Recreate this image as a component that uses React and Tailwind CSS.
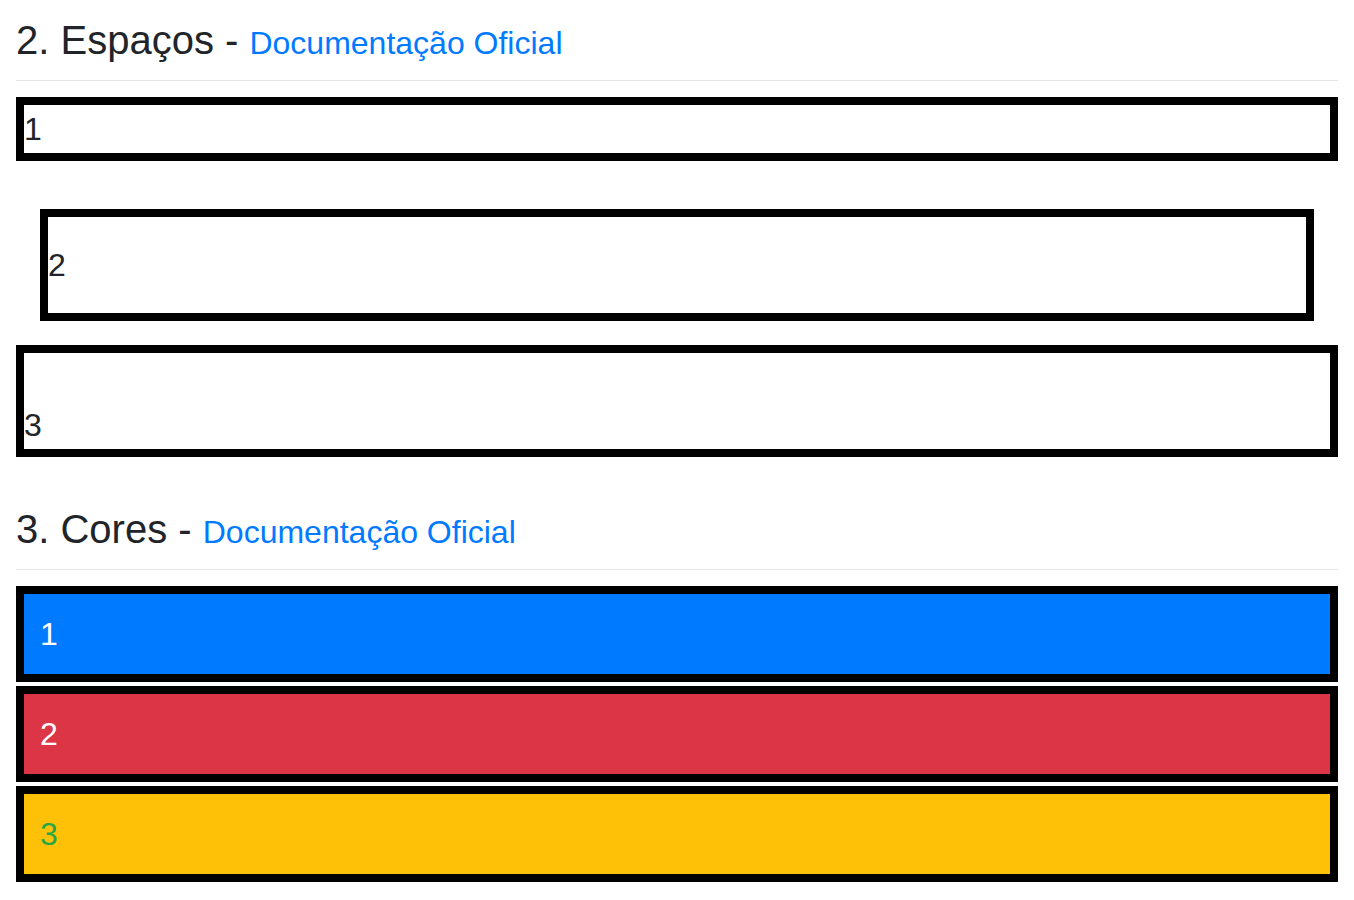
const font = { fontFamily: '"Liberation Sans", Arial, sans-serif' }

function Heading({ children }) {
  return (
    <>
      <h2 className="text-[40px] leading-[48px] font-normal text-[#212529]">
        {children} -{' '}
        <small className="text-[32px] leading-none">
          <a href="#" className="text-[#007bff] no-underline">Documentação Oficial</a>
        </small>
      </h2>
      <hr className="mt-4 mb-4 border-0 border-t border-[#e6e6e6]" />
    </>
  )
}

export default function App() {
  return (
    <div className="bg-white min-h-screen px-4 pt-4 text-[32px] leading-[48px] text-[#212529]" style={font}>
      <section className="flex flex-col">
        <Heading>2. Espaços</Heading>
        <div className="border-8 border-black mb-6">1</div>
        <div className="border-8 border-black m-6 py-6">2</div>
        <div className="border-8 border-black pt-12">3</div>
      </section>

      <section className="flex flex-col mt-12">
        <Heading>3. Cores</Heading>
        <div className="border-8 border-black mb-1 p-4 bg-[#007bff] text-white">1</div>
        <div className="border-8 border-black mb-1 p-4 bg-[#dc3545] text-white">2</div>
        <div className="border-8 border-black mb-1 p-4 bg-[#ffc107] text-[#28a745]">3</div>
      </section>
    </div>
  )
}
